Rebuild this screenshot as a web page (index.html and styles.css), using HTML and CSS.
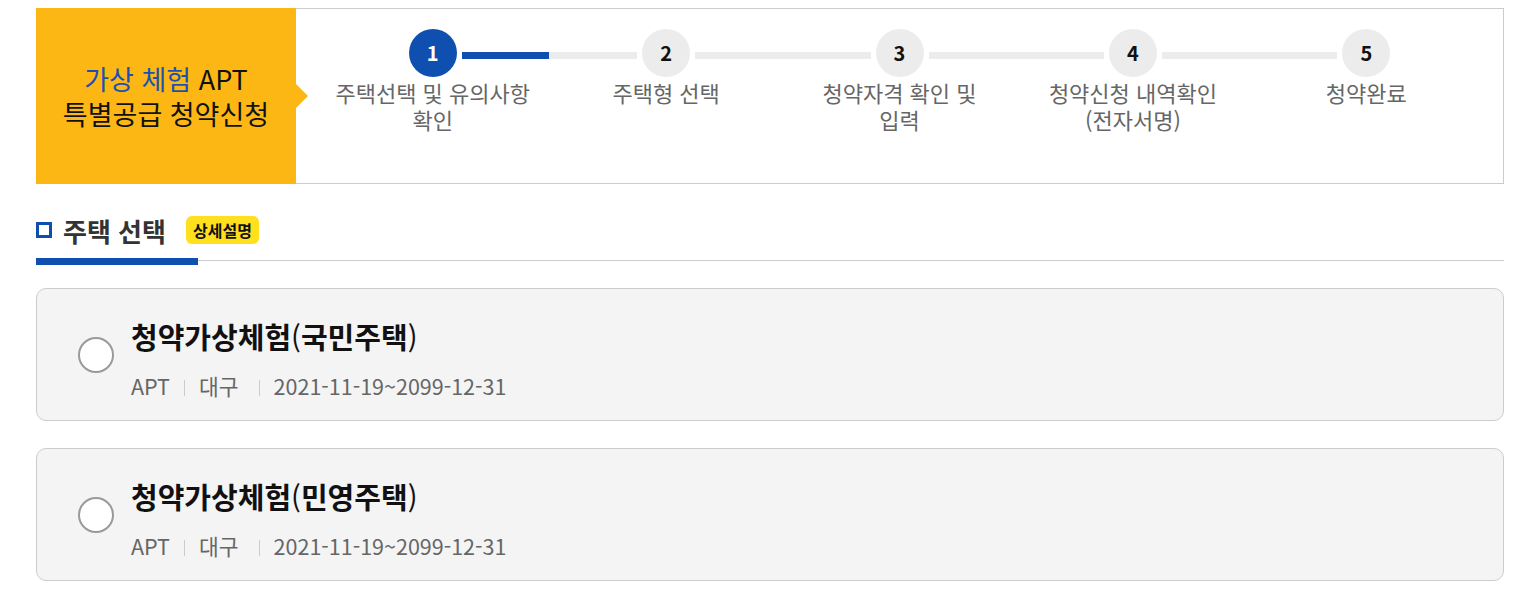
FILE: index.html
```html
<!DOCTYPE html>
<html lang="ko">
<head>
    <meta charset="UTF-8">
    <meta name="viewport" content="width=device-width, initial-scale=1.0">
    <title>가상 체험 APT 특별공급 청약신청</title>
    <link rel="stylesheet" href="styles.css">
</head>
<body>
    <div class="wrap">
        <!-- 진행 단계 -->
        <div class="step-box">
            <div class="step-head">
                <p><span class="blue">가상 체험</span> APT<br>특별공급 청약신청</p>
            </div>
            <ol class="steps">
                <li class="step on"><span class="num">1</span><span class="label">주택선택 및 유의사항<br>확인</span></li>
                <li class="step"><span class="num">2</span><span class="label">주택형 선택</span></li>
                <li class="step"><span class="num">3</span><span class="label">청약자격 확인 및<br>입력</span></li>
                <li class="step"><span class="num">4</span><span class="label">청약신청 내역확인<br>(전자서명)</span></li>
                <li class="step"><span class="num">5</span><span class="label">청약완료</span></li>
            </ol>
        </div>

        <!-- 주택 선택 -->
        <div class="sec-title">
            <span class="sq"></span>
            <h2>주택 선택</h2>
            <button class="badge">상세설명</button>
        </div>

        <ul class="house-list">
            <li class="house">
                <span class="radio"></span>
                <div class="info">
                    <p class="name">청약가상체험<span class="paren">(</span>국민주택<span class="paren">)</span></p>
                    <p class="meta"><span>APT</span><span>대구 </span><span>2021-11-19~2099-12-31</span></p>
                </div>
            </li>
            <li class="house">
                <span class="radio"></span>
                <div class="info">
                    <p class="name">청약가상체험<span class="paren">(</span>민영주택<span class="paren">)</span></p>
                    <p class="meta"><span>APT</span><span>대구 </span><span>2021-11-19~2099-12-31</span></p>
                </div>
            </li>
        </ul>
    </div>
</body>
</html>
```

FILE: styles.css
```css
body {
    margin: 0;
    font-family: "Noto Sans CJK KR", "Noto Sans", sans-serif;
    color: #333;
    background: #fff;
}
.wrap {
    width: 1468px;
    margin: 8px 0 0 36px;
}
p, ul, ol, h2 {
    margin: 0;
    padding: 0;
}

/* 진행 단계 */
.step-box {
    display: flex;
    height: 176px;
    box-sizing: border-box;
    border: 1px solid #ccc;
}
.step-head {
    position: relative;
    width: 260px;
    margin: -1px 0 -1px -1px;
    background: #fdb714;
    display: flex;
    align-items: center;
    justify-content: center;
    text-align: center;
    font-size: 27px;
    line-height: 35px;
    color: #111;
}
.step-head::after {
    content: "";
    position: absolute;
    right: -12px;
    top: 50%;
    margin-top: -12px;
    border-left: 12px solid #fdb714;
    border-top: 12px solid transparent;
    border-bottom: 12px solid transparent;
}
.step-head .blue {
    color: #1d50b0;
}
.steps {
    flex: 1;
    display: flex;
    list-style: none;
    padding: 20px 20px 0;
}
.step {
    position: relative;
    flex: 1;
    display: flex;
    flex-direction: column;
    align-items: center;
}
.step:not(:last-child)::after {
    content: "";
    position: absolute;
    top: 23px;
    left: calc(50% + 29px);
    width: calc(100% - 58px);
    height: 7px;
    background: #ececec;
}
.step.on::after {
    background: linear-gradient(to right, #0f4fb0 50%, #ececec 50%);
}
.num {
    width: 48px;
    height: 48px;
    border-radius: 50%;
    background: #ececec;
    color: #111;
    font-size: 20px;
    font-weight: bold;
    line-height: 48px;
    text-align: center;
}
.step.on .num {
    background: #0f4fb0;
    color: #fff;
}
.label {
    margin-top: 2px;
    font-size: 22px;
    line-height: 27px;
    color: #666;
    text-align: center;
}

/* 섹션 제목 */
.sec-title {
    position: relative;
    display: flex;
    align-items: center;
    height: 77px;
    box-sizing: border-box;
    padding-top: 16px;
    border-bottom: 1px solid #ccc;
}
.sec-title::after {
    content: "";
    position: absolute;
    left: 0;
    bottom: -5px;
    width: 162px;
    height: 7px;
    background: #0f4fb0;
}
.sq {
    width: 10px;
    height: 10px;
    border: 3px solid #0f4fb0;
    margin-right: 11px;
}
.sec-title h2 {
    font-size: 26px;
    font-weight: bold;
    color: #333;
}
.badge {
    margin-left: 20px;
    padding: 0 7px;
    height: 28px;
    border: none;
    border-radius: 6px;
    background: #ffe01f;
    font-family: inherit;
    font-size: 16px;
    font-weight: bold;
    color: #111;
}

/* 주택 목록 */
.house-list {
    list-style: none;
    margin-top: 27px;
}
.house {
    display: flex;
    align-items: flex-start;
    height: 133px;
    box-sizing: border-box;
    padding: 29px 0 0 41px;
    margin-bottom: 27px;
    background: #f4f4f4;
    border: 1px solid #ccc;
    border-radius: 10px;
}
.radio {
    width: 32px;
    height: 32px;
    margin-top: 19px;
    border: 2px solid #999;
    border-radius: 50%;
    background: #fff;
}
.info {
    margin-left: 17px;
}
.name {
    font-size: 29px;
    font-weight: bold;
    line-height: 36px;
    color: #111;
}
.name .paren {
    font-weight: normal;
}
.meta {
    margin-top: 17px;
    font-size: 21.5px;
    line-height: 30px;
    color: #666;
}
.meta span + span::before {
    content: "";
    display: inline-block;
    width: 1px;
    height: 16px;
    background: #ccc;
    margin: 0 14px;
    vertical-align: -1px;
}
```
